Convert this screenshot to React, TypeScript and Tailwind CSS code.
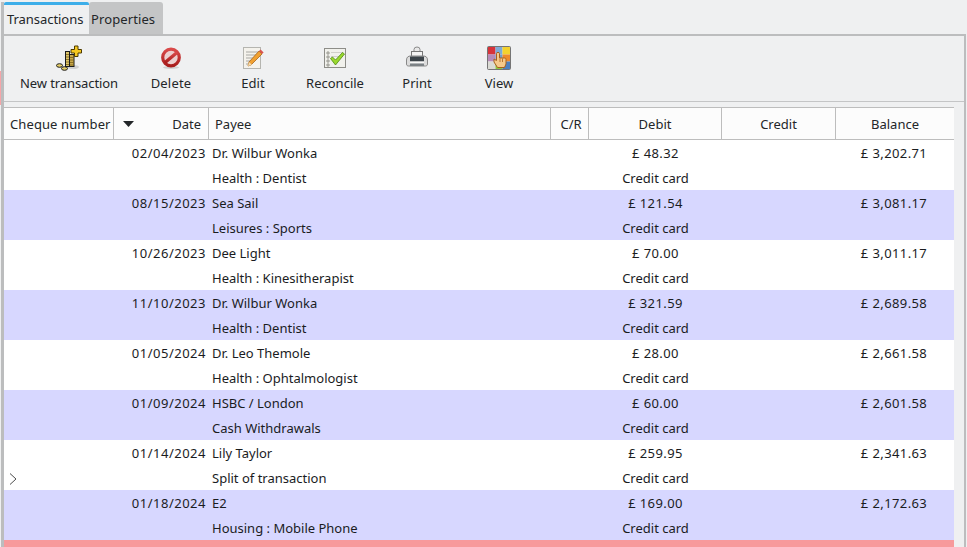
const rows = [
  ["02/04/2023", "Dr. Wilbur Wonka", "Health : Dentist", "£ 48.32", "£ 3,202.71"],
  ["08/15/2023", "Sea Sail", "Leisures : Sports", "£ 121.54", "£ 3,081.17"],
  ["10/26/2023", "Dee Light", "Health : Kinesitherapist", "£ 70.00", "£ 3,011.17"],
  ["11/10/2023", "Dr. Wilbur Wonka", "Health : Dentist", "£ 321.59", "£ 2,689.58"],
  ["01/05/2024", "Dr. Leo Themole", "Health : Ophtalmologist", "£ 28.00", "£ 2,661.58"],
  ["01/09/2024", "HSBC / London", "Cash Withdrawals", "£ 60.00", "£ 2,601.58"],
  ["01/14/2024", "Lily Taylor", "Split of transaction", "£ 259.95", "£ 2,341.63"],
  ["01/18/2024", "E2", "Housing : Mobile Phone", "£ 169.00", "£ 2,172.63"],
];

const cols = "grid grid-cols-[110px_95px_342px_38px_133px_114px_118px]";

function CoinsIcon() {
  return (
    <svg width="26" height="26" viewBox="0 0 26 26">
      <ellipse cx="17" cy="22" rx="6" ry="2" fill="#00000022" />
      <ellipse cx="3.500" cy="20.500" rx="3" ry="1.800" fill="#e6cf6a" stroke="#1c1c1c" strokeWidth="1" />
      <ellipse cx="8.500" cy="23.500" rx="3" ry="1.800" fill="#e6cf6a" stroke="#1c1c1c" strokeWidth="1" />
      <rect x="9.500" y="6.500" width="4" height="15" fill="#dcc46a" stroke="#1c1c1c" strokeWidth="1" />
      <rect x="13.500" y="9.500" width="4.500" height="12" fill="#c9a94a" stroke="#1c1c1c" strokeWidth="1" />
      <path d="M14 12.500h4M14 15h4M14 17.500h4M14 20h4M10 9.500h3M10 12h3M10 14.500h3M10 17h3M10 19.500h3" stroke="#7a5f16" strokeWidth="0.8" />
      <path d="M18.500 1h3.500v3.500h3.500V8H22v3.500h-3.500V8H15V4.500h3.500z" fill="#f6c820" stroke="#4d3b00" strokeWidth="1" />
    </svg>
  );
}

function DeleteIcon() {
  return (
    <svg width="22" height="22" viewBox="0 0 22 22">
      <defs>
        <linearGradient id="ring" x1="0" y1="0" x2="0" y2="1">
          <stop offset="0" stopColor="#d94a4a" />
          <stop offset="1" stopColor="#a81c1c" />
        </linearGradient>
      </defs>
      <ellipse cx="11" cy="20.500" rx="8" ry="1.500" fill="#00000022" />
      <circle cx="11" cy="10.500" r="8.300" fill="#ecd0d0" stroke="url(#ring)" strokeWidth="3.200" />
      <path d="M5 15.500 17 5.500" stroke="url(#ring)" strokeWidth="3.400" />
    </svg>
  );
}

function EditIcon() {
  return (
    <svg width="24" height="24" viewBox="0 0 24 24">
      <rect x="2.500" y="1.500" width="17" height="21" fill="#f4f2ec" stroke="#b5b5b0" />
      <path d="M5 6h12M5 9h10M5 12h8M5 15h6M5 18h5" stroke="#a8a8a4" strokeWidth="1" />
      <path d="M7 20l1-4L18 5l3 3L10 19z" fill="#f0a030" stroke="#a8641a" strokeWidth="0.800" />
      <path d="M18 5l1.600-1.600 3 3L21 8z" fill="#d9534f" />
      <path d="M7 20l1-4 3 3z" fill="#f4dcb0" />
    </svg>
  );
}

function ReconcileIcon() {
  return (
    <svg width="24" height="24" viewBox="0 0 24 24">
      <rect x="1.500" y="2.500" width="21" height="19" fill="#f1f1ec" stroke="#8d8d88" />
      <path d="M4 6h2v2H4zM4 10h2v2H4zM4 14h2v2H4zM4 18h2v2H4z" fill="none" stroke="#85857f" strokeWidth="0.800" />
      <path d="M8 6.500h12M8 10.500h12" stroke="#d0d0ca" />
      <path d="M7.500 12.500l2-1.500 3 3 7-7.500 2 1.500-9 11z" fill="#9ad82e" stroke="#4c8a10" strokeWidth="0.800" />
    </svg>
  );
}

function PrintIcon() {
  return (
    <svg width="24" height="24" viewBox="0 0 24 24">
      <path d="M9 7V3.500a3 2.500 0 0 1 6 0V7" fill="#e8e8e8" stroke="#8a8a8a" />
      <rect x="6.500" y="5.500" width="11" height="6" fill="#f4f4f4" stroke="#777" />
      <path d="M1.500 14c0-3 2-4 4-4h13c2 0 4 1 4 4v4c0 1.500-1 2-2 2h-17c-1 0-2-.5-2-2z" fill="#dcdcdc" stroke="#888" />
      <rect x="5" y="10.500" width="14" height="5" fill="#3c444a" />
      <rect x="5" y="15.500" width="14" height="2" fill="#f8f8f8" />
      <rect x="5" y="17.500" width="14" height="2.500" fill="#7c8286" />
    </svg>
  );
}

function ViewIcon() {
  return (
    <svg width="24" height="24" viewBox="0 0 24 24">
      <rect x="1" y="1" width="7.500" height="7.500" fill="#d8333a" />
      <rect x="8.500" y="1" width="7" height="7.500" fill="#7eaad6" />
      <rect x="15.500" y="1" width="7.500" height="7.500" fill="#f4d22e" />
      <rect x="1" y="8.500" width="7.500" height="7" fill="#b78ab8" />
      <rect x="8.500" y="8.500" width="7" height="7" fill="#6f9ccc" />
      <rect x="15.500" y="8.500" width="7.500" height="7" fill="#ee8a2c" />
      <rect x="1" y="15.500" width="7.500" height="7.500" fill="#dadad4" />
      <rect x="8.500" y="15.500" width="7" height="7.500" fill="#8ec63f" />
      <rect x="15.500" y="15.500" width="7.500" height="7.500" fill="#4d80c0" />
      <rect x="0.500" y="0.500" width="23" height="23" rx="1" fill="none" stroke="#555" strokeWidth="0.800" />
      <path d="M9.500 7.500c0-1.500 3-1.500 3 0V12h5c1 0 1.500.5 1.500 1.500V18l-1.500 3.500h-7L7 16v-3l2.500 1.500z" fill="#f6c98a" stroke="#a8601c" strokeWidth="1" />
      <path d="M13 12.500v3.500M15.500 12.500v3.500" stroke="#a8601c" strokeWidth="0.800" />
    </svg>
  );
}

const tools = [
  { label: "New transaction", icon: <CoinsIcon />, w: "w-[122px] tracking-[-0.1px]" },
  { label: "Delete", icon: <DeleteIcon />, w: "w-[82px] tracking-[0.2px]" },
  { label: "Edit", icon: <EditIcon />, w: "w-[82px]" },
  { label: "Reconcile", icon: <ReconcileIcon />, w: "w-[82px]" },
  { label: "Print", icon: <PrintIcon />, w: "w-[82px]" },
  { label: "View", icon: <ViewIcon />, w: "w-[82px]" },
];

function Head({ children, className = "" }: { children?: React.ReactNode; className?: string }) {
  return <div className={`flex h-[31px] items-center border-r border-[#bdbdbd] pt-[1px] ${className}`}>{children}</div>;
}

export default function App() {
  return (
    <div className="relative h-[547px] w-[967px] overflow-hidden bg-[#eff0f1] pl-[1px] pr-[1px] pt-[2px] text-[13px] leading-[18px] text-[#232629] [font-family:'Noto_Sans',sans-serif]">
      <div className="absolute left-0 top-[71px] h-[34px] w-[1px] bg-[#f6a5a8]" />
      <div className="h-[545px] overflow-hidden border-l-[3px] border-[#bcbdbe]">
        <div className="flex h-[32px]">
          <div className="flex h-[32px] w-[85px] flex-col">
            <div className="h-[3px] rounded-t-[2px] bg-[#3daee9]" />
            <div className="pl-[3px] pt-[5px] tracking-[-0.05px]">Transactions</div>
          </div>
          <div className="h-[32px] w-[74px] rounded-t-[3px] bg-[#c4c5c6] pl-[2px] pt-[8px] tracking-[0.1px]">Properties</div>
        </div>
        <div className="h-[513px] overflow-hidden border-r-2 border-t-2 border-[#bcbdbe]">
          <div className="flex h-[66px] items-start border-b border-[#c4c5c6] pl-[4px] pt-[9px]">
            {tools.map((t) => (
              <div key={t.label} className={`flex flex-col items-center ${t.w}`}>
                <div className="flex h-[26px] items-center justify-center">{t.icon}</div>
                <div className="mt-[3px]">{t.label}</div>
              </div>
            ))}
          </div>
          <div className="mt-[5px] w-[950px] bg-white">
            <div className={`${cols} border-y border-[#bdbdbd] bg-[#fcfcfc]`}>
              <Head className="pl-[6px] tracking-[0.1px]">Cheque number</Head>
              <Head className="justify-between pl-[9px] pr-[7px]">
                <svg width="11" height="6" viewBox="0 0 11 6"><path d="M0 0h11L5.500 6z" fill="#232629" /></svg>
                <span>Date</span>
              </Head>
              <Head className="pl-[6px]">Payee</Head>
              <Head className="justify-center pl-[3px]">C/R</Head>
              <Head className="justify-center">Debit</Head>
              <Head className="justify-center">Credit</Head>
              <Head className="justify-center border-r-0">Balance</Head>
            </div>
            {rows.map((r, i) => (
              <div key={r[0]} className={`${cols} h-[50px] ${i % 2 ? "bg-[#d7d7ff]" : "bg-white"} text-[#1a1c1e]`}>
                <div className="flex flex-col justify-end pb-[5px] pl-[5px]">
                  {i === 6 && (
                    <svg width="8" height="12" viewBox="0 0 8 12"><path d="M1 .5l6 5.500-6 5.500" fill="none" stroke="#4d4d4d" strokeWidth="1" /></svg>
                  )}
                </div>
                <div className="pr-[3px] pt-[4px] text-right tracking-[0.5px]">{r[0]}</div>
                <div className="flex flex-col gap-[7px] pl-[3px] pt-[4px]">
                  <div>{r[1]}</div>
                  <div>{r[2]}</div>
                </div>
                <div />
                <div className="flex flex-col items-center gap-[7px] pt-[4px]">
                  <div className="tracking-[0.4px]">{r[3]}</div>
                  <div>Credit card</div>
                </div>
                <div />
                <div className="pr-[2px] pt-[4px] text-center tracking-[0.4px]">{r[4]}</div>
              </div>
            ))}
            <div className="h-[10px] bg-[#f79a9c]" />
          </div>
        </div>
      </div>
    </div>
  );
}
